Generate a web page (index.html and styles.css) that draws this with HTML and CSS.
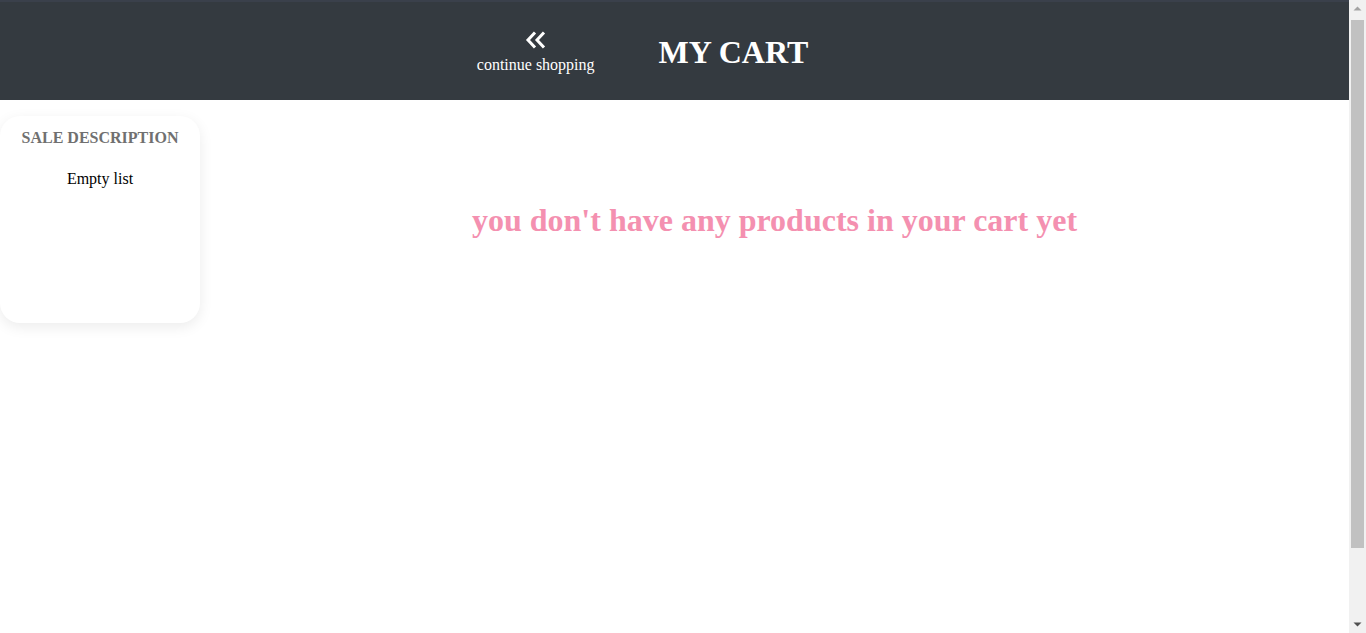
FILE: index.html
```html
<!DOCTYPE html>
<html>
<head>
<meta charset="utf-8">
<link rel="stylesheet" href="styles.css">
</head>
<body>
<header class="topbar">
  <a class="back" href="#">
    <svg class="back-icon" width="22" height="18" viewBox="0 0 22 18"><path d="M10 1.5 L3 9 L10 16.5 M19 1.5 L12 9 L19 16.5" fill="none" stroke="#fff" stroke-width="3" stroke-linejoin="miter" stroke-linecap="butt"/></svg>
    <span class="back-label">continue shopping</span>
  </a>
  <h1 class="title">MY CART</h1>
</header>
<div class="page">
  <aside class="sale-card">
    <h4 class="sale-title">SALE DESCRIPTION</h4>
    <p class="sale-empty">Empty list</p>
  </aside>
  <main class="content">
    <h1 class="empty-msg">you don't have any products in your cart yet</h1>
  </main>
</div>
<div class="scrollbar" aria-hidden="true">
  <div class="sb-arrow sb-up"><svg width="17" height="17" viewBox="0 0 17 17"><path d="M4.5 10.5 L8.5 6.5 L12.5 10.5 Z" fill="#a3a3a3"/></svg></div>
  <div class="sb-track"><div class="sb-thumb"></div></div>
  <div class="sb-arrow sb-down"><svg width="17" height="17" viewBox="0 0 17 17"><path d="M4.5 6.5 L8.5 10.5 L12.5 6.5 Z" fill="#505050"/></svg></div>
</div>
</body>
</html>
```
FILE: styles.css
```css
html, body {
  margin: 0;
  padding: 0;
}
body {
  font-family: "Liberation Serif", "Times New Roman", serif;
  background: #fff;
  color: #000;
  padding-right: 17px;
}
.topbar {
  height: 100px;
  box-sizing: border-box;
  background: #343a40;
  border-top: 2px solid #3a404b;
  display: flex;
  justify-content: center;
  align-items: center;
  padding-right: 64px;
}
.back {
  display: flex;
  flex-direction: column;
  align-items: center;
  color: #fff;
  text-decoration: none;
  font-size: 16px;
  margin-top: 3px;
}
.back-icon {
  display: block;
  margin-bottom: 7px;
}
.back-label {
  line-height: 18px;
}
.title {
  margin: 3px 0 0 64px;
  color: #fff;
  font-size: 32px;
  font-weight: bold;
}
.page {
  display: flex;
  align-items: flex-start;
  min-height: 618px;
}
.sale-card {
  width: 200px;
  height: 207px;
  box-sizing: border-box;
  margin-top: 16px;
  border-radius: 20px;
  background: #fff;
  box-shadow: 0 4px 14px rgba(0, 0, 0, 0.08);
  text-align: center;
  padding-top: 13px;
  flex: none;
}
.sale-title {
  margin: 0;
  font-size: 16px;
  color: #707070;
  font-weight: bold;
}
.sale-empty {
  margin: 23px 0 0;
  font-size: 16px;
}
.content {
  flex: 1;
  text-align: center;
}
.empty-msg {
  margin: 102px 0 0;
  font-size: 32px;
  font-weight: bold;
  color: #f490b0;
}
.scrollbar {
  position: fixed;
  top: 0;
  right: 0;
  bottom: 0;
  width: 17px;
  background: #f1f1f1;
  display: flex;
  flex-direction: column;
}
.sb-arrow {
  height: 17px;
  flex: none;
}
.sb-arrow svg {
  display: block;
}
.sb-track {
  flex: 1;
  padding: 3px 2px 0;
}
.sb-thumb {
  height: 528px;
  background: #c1c1c1;
}
```
